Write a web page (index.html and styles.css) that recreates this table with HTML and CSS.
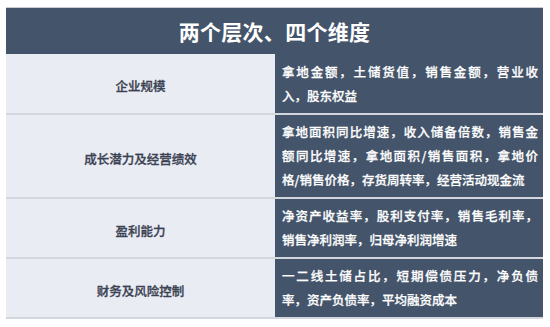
FILE: index.html
```html
<!DOCTYPE html>
<html lang="zh-CN">
<head>
<meta charset="utf-8">
<title>两个层次、四个维度</title>
<link rel="stylesheet" href="styles.css">
</head>
<body>
<div class="table">
  <div class="head">两个层次、四个维度</div>
  <div class="row r1">
    <div class="name">企业规模</div>
    <div class="desc">
      <span class="ln">拿地金额，土储货值，销售金额，营业收</span>
      <span class="last">入，股东权益</span>
    </div>
  </div>
  <div class="row r2">
    <div class="name">成长潜力及经营绩效</div>
    <div class="desc">
      <span class="ln">拿地面积同比增速，收入储备倍数，销售金</span>
      <span class="ln">额同比增速，拿地面积/销售面积，拿地价</span>
      <span class="last">格/销售价格，存货周转率，经营活动现金流</span>
    </div>
  </div>
  <div class="row r3">
    <div class="name">盈利能力</div>
    <div class="desc">
      <span class="ln">净资产收益率，股利支付率，销售毛利率，</span>
      <span class="last">销售净利润率，归母净利润增速</span>
    </div>
  </div>
  <div class="row r4">
    <div class="name">财务及风险控制</div>
    <div class="desc">
      <span class="ln">一二线土储占比，短期偿债压力，净负债</span>
      <span class="last">率，资产负债率，平均融资成本</span>
    </div>
  </div>
</div>
</body>
</html>
```
FILE: styles.css
```css
html, body {
  margin: 0;
  padding: 0;
  background: #ffffff;
}
body {
  padding: 7px 0 0 6px;
  font-family: "Noto Sans CJK SC", "Microsoft YaHei", sans-serif;
}
.table {
  width: 537px;
  border-top: 1px solid #c9ccd3;
  border-bottom: 2px solid #d3d6de;
}
.head {
  height: 46px;
  background: #44546a;
  color: #ffffff;
  font-size: 21px;
  font-weight: 700;
  line-height: 46px;
  text-align: center;
  letter-spacing: 0.3px;
}
.row {
  display: grid;
  grid-template-columns: 269px 268px;
  border-top: 2px solid #d3d6de;
}
.r1 { border-top: none; height: 59px; }
.r2 { height: 82px; }
.r3 { height: 58px; }
.r4 { height: 58px; }
.name {
  background: #eaecf4;
  color: #3a4252;
  font-size: 12.5px;
  font-weight: 500;
  -webkit-text-stroke: 0.3px #3a4252;
  display: flex;
  align-items: center;
  justify-content: center;
  padding-top: 4px;
}
.desc {
  background: #44546a;
  color: #ffffff;
  font-size: 12.5px;
  font-weight: 500;
  -webkit-text-stroke: 0.25px #ffffff;
  line-height: 24px;
  padding: 0 5px 0 7px;
  display: flex;
  flex-direction: column;
  justify-content: center;
}
.ln {
  display: block;
  text-align: justify;
  text-align-last: justify;
}
.last {
  display: block;
  text-align: left;
}
```
